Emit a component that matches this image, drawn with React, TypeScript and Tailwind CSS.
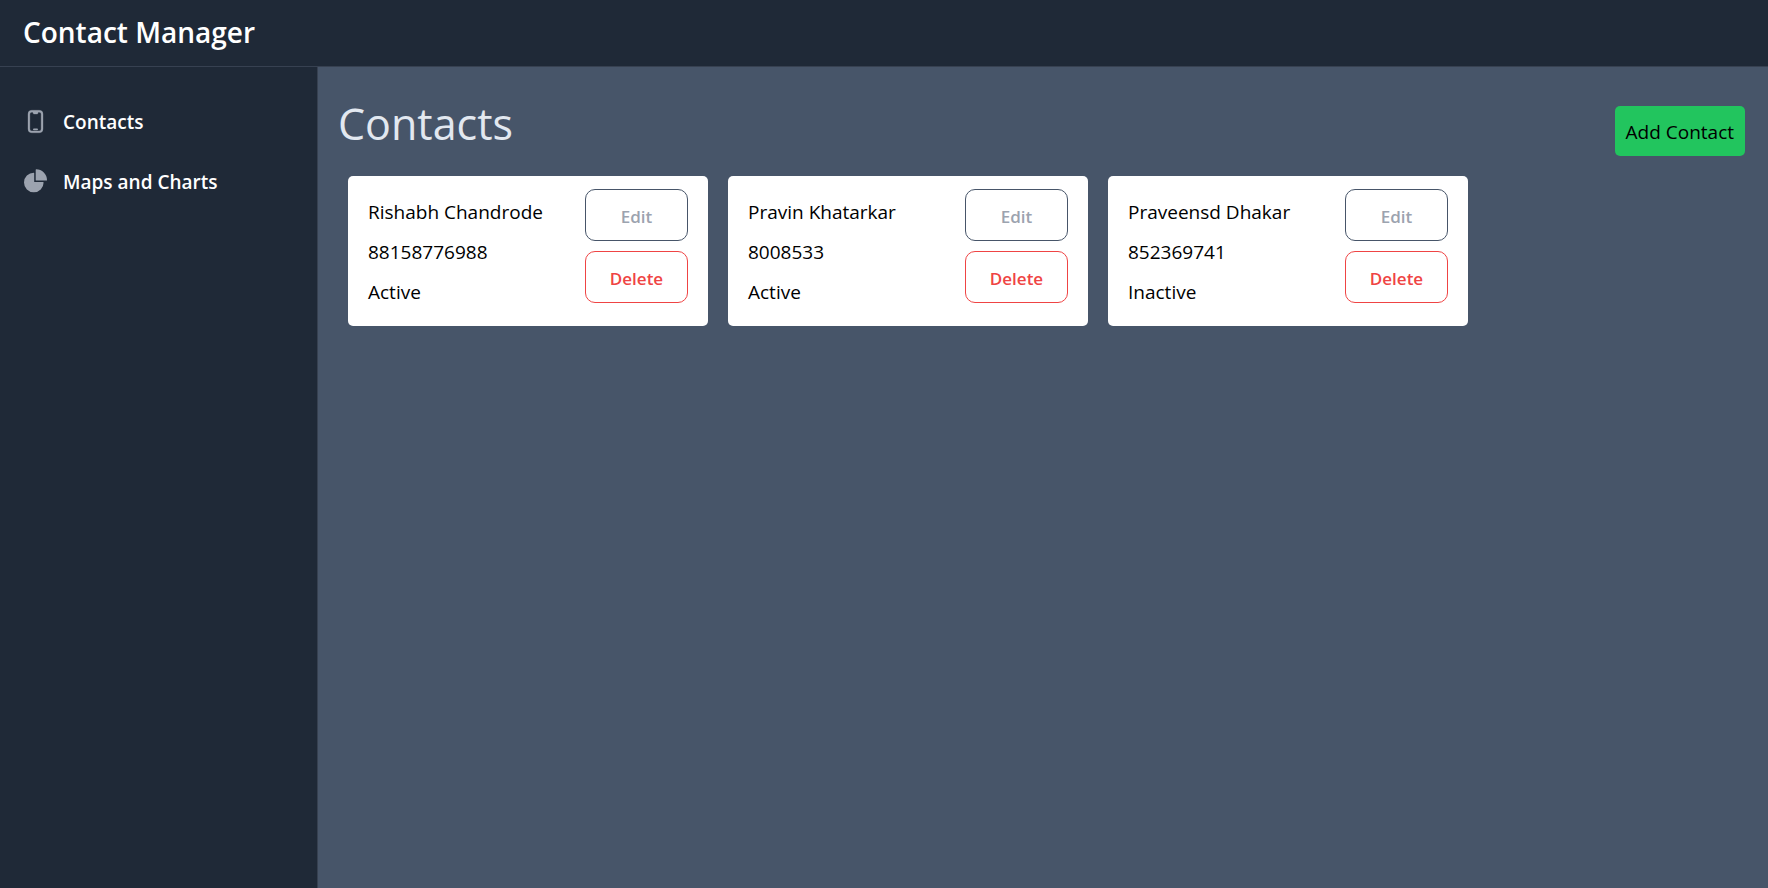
import type { ReactNode } from "react";

type Contact = { name: string; phone: string; status: "Active" | "Inactive" };

const contacts: Contact[] = [
  { name: "Rishabh Chandrode", phone: "88158776988", status: "Active" },
  { name: "Pravin Khatarkar", phone: "8008533", status: "Active" },
  { name: "Praveensd Dhakar", phone: "852369741", status: "Inactive" },
];

function PhoneIcon() {
  return (
    <svg
      className="size-[25px]"
      viewBox="0 0 20 20"
      fill="currentColor"
      aria-hidden="true"
    >
      <path d="M8 16.25a.75.75 0 0 1 .75-.75h2.5a.75.75 0 0 1 0 1.5h-2.5a.75.75 0 0 1-.75-.75Z" />
      <path
        fillRule="evenodd"
        clipRule="evenodd"
        stroke="currentColor"
        strokeWidth=".25"
        d="M4 4a3 3 0 0 1 3-3h6a3 3 0 0 1 3 3v12a3 3 0 0 1-3 3H7a3 3 0 0 1-3-3V4Zm4-1.5v.75c0 .414.336.75.75.75h2.5a.75.75 0 0 0 .75-.75V2.5h1A1.5 1.5 0 0 1 14.5 4v12a1.5 1.5 0 0 1-1.5 1.5H7A1.5 1.5 0 0 1 5.5 16V4A1.5 1.5 0 0 1 7 2.5h1Z"
      />
    </svg>
  );
}

function PieIcon() {
  return (
    <svg
      className="size-[25px]"
      viewBox="0 0 25 25"
      fill="currentColor"
      aria-hidden="true"
    >
      <path d="M10.8 3.7a9.8 9.8 0 1 0 9.8 9.8q0-.4-.4-.4H11.6a.4.4 0 0 1-.4-.4V4.1q0-.4-.4-.4Z" />
      <path d="M12.7.7a.4.4 0 0 1 .4-.4A10.9 10.9 0 0 1 24 11.2a.4.4 0 0 1-.4.4H13.1a.4.4 0 0 1-.4-.4V.7Z" />
    </svg>
  );
}

function NavItem({ icon, children }: { icon: ReactNode; children: ReactNode }) {
  return (
    <li>
      <a href="#" className="flex items-start gap-[15px] rounded-lg p-[10px] text-[19px] leading-[30px] font-semibold text-white">
        <span className="shrink-0 pt-[2px] text-[#9ca3af]">{icon}</span>
        <span>{children}</span>
      </a>
    </li>
  );
}

function ContactCard({ contact }: { contact: Contact }) {
  return (
    <li className="flex w-[360px] items-start justify-between rounded-[5px] bg-white px-5 py-[13px] text-black">
      <div className="pt-[3px] pb-px text-[19px] leading-10">
        <p>{contact.name}</p>
        <p>{contact.phone}</p>
        <p>{contact.status}</p>
      </div>
      <div className="flex w-[103px] flex-col gap-[10px] text-[17px] leading-[25px] font-semibold">
        <button type="button" className="rounded-[10px] border border-[#475569] pt-[14px] pb-[11px] text-[#9ca3af]">
          Edit
        </button>
        <button type="button" className="rounded-[10px] border border-[#ef4444] pt-[14px] pb-[11px] text-[#ef4444]">
          Delete
        </button>
      </div>
    </li>
  );
}

export default function App() {
  return (
    <div className="flex min-h-screen flex-col bg-[#475569] font-['Open_Sans','Noto_Sans',sans-serif]">
      <header className="border-b border-[#374151] bg-[#1f2937] px-[23px] pt-3 pb-[14px]">
        <a href="#" className="block text-[28px] leading-10 font-semibold text-white">
          Contact Manager
        </a>
      </header>
      <div className="flex grow">
        <aside className="w-[318px] shrink-0 border-r border-[#374151] bg-[#1f2937] px-[13px] pt-[30px]">
          <nav>
            <ul className="flex flex-col gap-[10px]">
              <NavItem icon={<PhoneIcon />}>Contacts</NavItem>
              <NavItem icon={<PieIcon />}>Maps and Charts</NavItem>
            </ul>
          </nav>
        </aside>
        <main className="grow px-5 pt-[29px]">
          <div className="flex justify-between pr-[3px]">
            <h1 className="text-[43px] leading-[56px] text-[#e2e8f0]">Contacts</h1>
            <button type="button" className="mt-[10px] rounded-[5px] bg-[#22c55e] px-[11px] pt-[11px] pb-[9px] text-[19px] leading-[30px] text-black">
              Add Contact
            </button>
          </div>
          <ul className="flex flex-wrap gap-5 px-[10px] pt-5">
            {contacts.map((contact) => (
              <ContactCard key={contact.name} contact={contact} />
            ))}
          </ul>
        </main>
      </div>
    </div>
  );
}
